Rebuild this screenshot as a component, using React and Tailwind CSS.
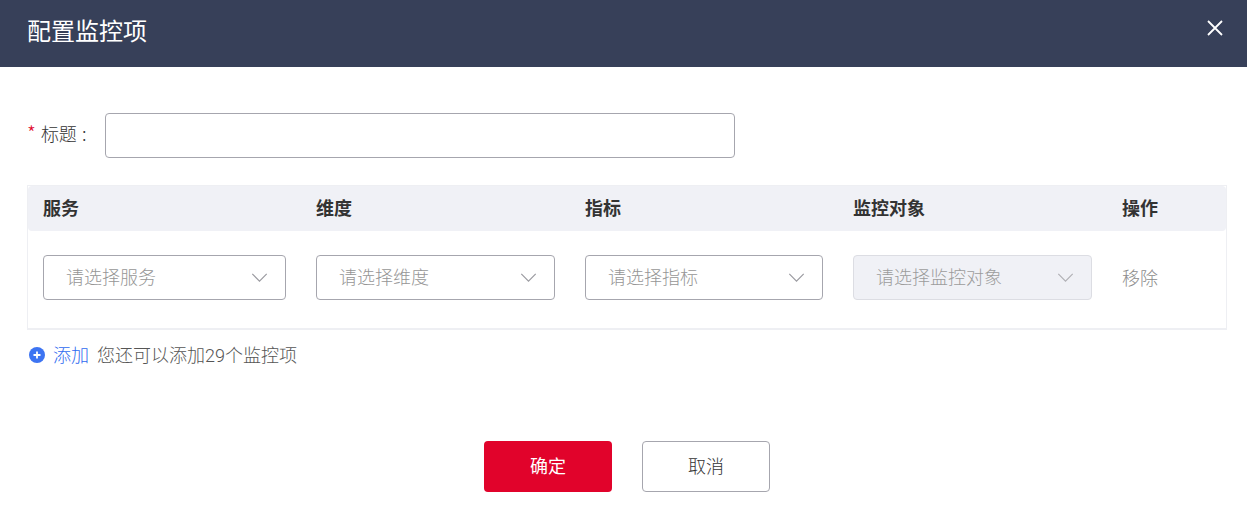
const font = '"Noto Sans CJK SC"';

function Chevron({ className }) {
  return (
    <svg viewBox="0 0 18 10" className={className} fill="none" stroke="currentColor" strokeWidth="1.3">
      <path d="M1 1l8 8 8-8" />
    </svg>
  );
}

function Select({ label, disabled }) {
  return (
    <div
      className={
        "flex h-[45px] items-center justify-between rounded-[4px] border pl-[22px] pr-[17px] text-[18px] font-light " +
        (disabled
          ? "border-[#dcdde3] bg-[#f0f1f6] text-[#9c9c9c]"
          : "border-[#a6a6ae] bg-white text-[#969696]")
      }
    >
      <span className="mb-[3px]">{label}</span>
      <Chevron className={"h-[9px] w-[17px] " + (disabled ? "text-[#b0b0b5]" : "text-[#9a9aa0]")} />
    </div>
  );
}

const columns = "grid grid-cols-[273px_269px_268px_269px_1fr]";

export default function App() {
  return (
    <div className="h-[509px] w-[1247px] overflow-hidden bg-white" style={{ fontFamily: font + ", sans-serif" }}>
      <header className="flex h-[67px] items-center justify-between bg-[#374059] pl-[27px] pr-[24px] text-white">
        <h1 className="mb-[7px] text-[24px] leading-[32px]">配置监控项</h1>
        <svg viewBox="0 0 16 16" className="mb-[11px] h-4 w-4" fill="none" stroke="currentColor" strokeWidth="1.8">
          <path d="M1 1l14 14M15 1L1 15" />
        </svg>
      </header>

      <main className="px-[27px] pt-[46px]">
        <div className="flex items-center">
          <label className="mb-[5px] flex w-[78px] items-center text-[18px] font-light text-[#333]">
            <span className="mr-[5px] text-[20px] leading-[20px] text-[#e0062b]">*</span>
            标题<span className="ml-[5px]">:</span>
          </label>
          <div className="h-[45px] w-[630px] rounded-[4px] border border-[#a6a6ae] bg-white" />
        </div>

        <section className="mt-[27px] h-[145px] w-[1200px] border border-b-2 border-[#eeeff3]">
          <div className={columns + " h-[45px] items-center rounded-[4px] bg-[#f0f1f6] pb-[3px] pl-[15px] text-[18px] font-bold text-[#333]"}>
            <span>服务</span>
            <span>维度</span>
            <span>指标</span>
            <span>监控对象</span>
            <span>操作</span>
          </div>
          <div className={columns + " items-center pl-[15px] pt-[24px]"}>
            <div className="pr-[30px]"><Select label="请选择服务" /></div>
            <div className="pr-[30px]"><Select label="请选择维度" /></div>
            <div className="pr-[30px]"><Select label="请选择指标" /></div>
            <div className="pr-[30px]"><Select label="请选择监控对象" disabled /></div>
            <span className="text-[18px] font-light text-[#8c8c8c]">移除</span>
          </div>
        </section>

        <div className="mt-[13px] flex h-[24px] items-center pl-[2px] text-[18px] font-light">
          <svg viewBox="0 0 16 16" className="mr-[8px] h-4 w-4">
            <circle cx="8" cy="8" r="8" fill="#3d74f2" />
            <path d="M4.5 8h7M8 4.5v7" stroke="#fff" strokeWidth="1.8" />
          </svg>
          <span className="mb-[1px] text-[#2f6bf0]">添加</span>
          <span className="mb-[1px] ml-[8px] text-[#555]">
            您还可以添加<span className="font-['Roboto',sans-serif] font-light">29</span>个监控项
          </span>
        </div>

        <div className="mt-[74px] flex justify-center gap-[30px] pl-[7px]">
          <button className="h-[51px] w-[128px] rounded-[4px] bg-[#e1032b] pb-[2px] text-[18px] text-white">确定</button>
          <button className="h-[51px] w-[128px] rounded-[4px] border border-[#a6a6ae] bg-white pb-[2px] text-[18px] font-light text-[#333]">取消</button>
        </div>
      </main>
    </div>
  );
}
